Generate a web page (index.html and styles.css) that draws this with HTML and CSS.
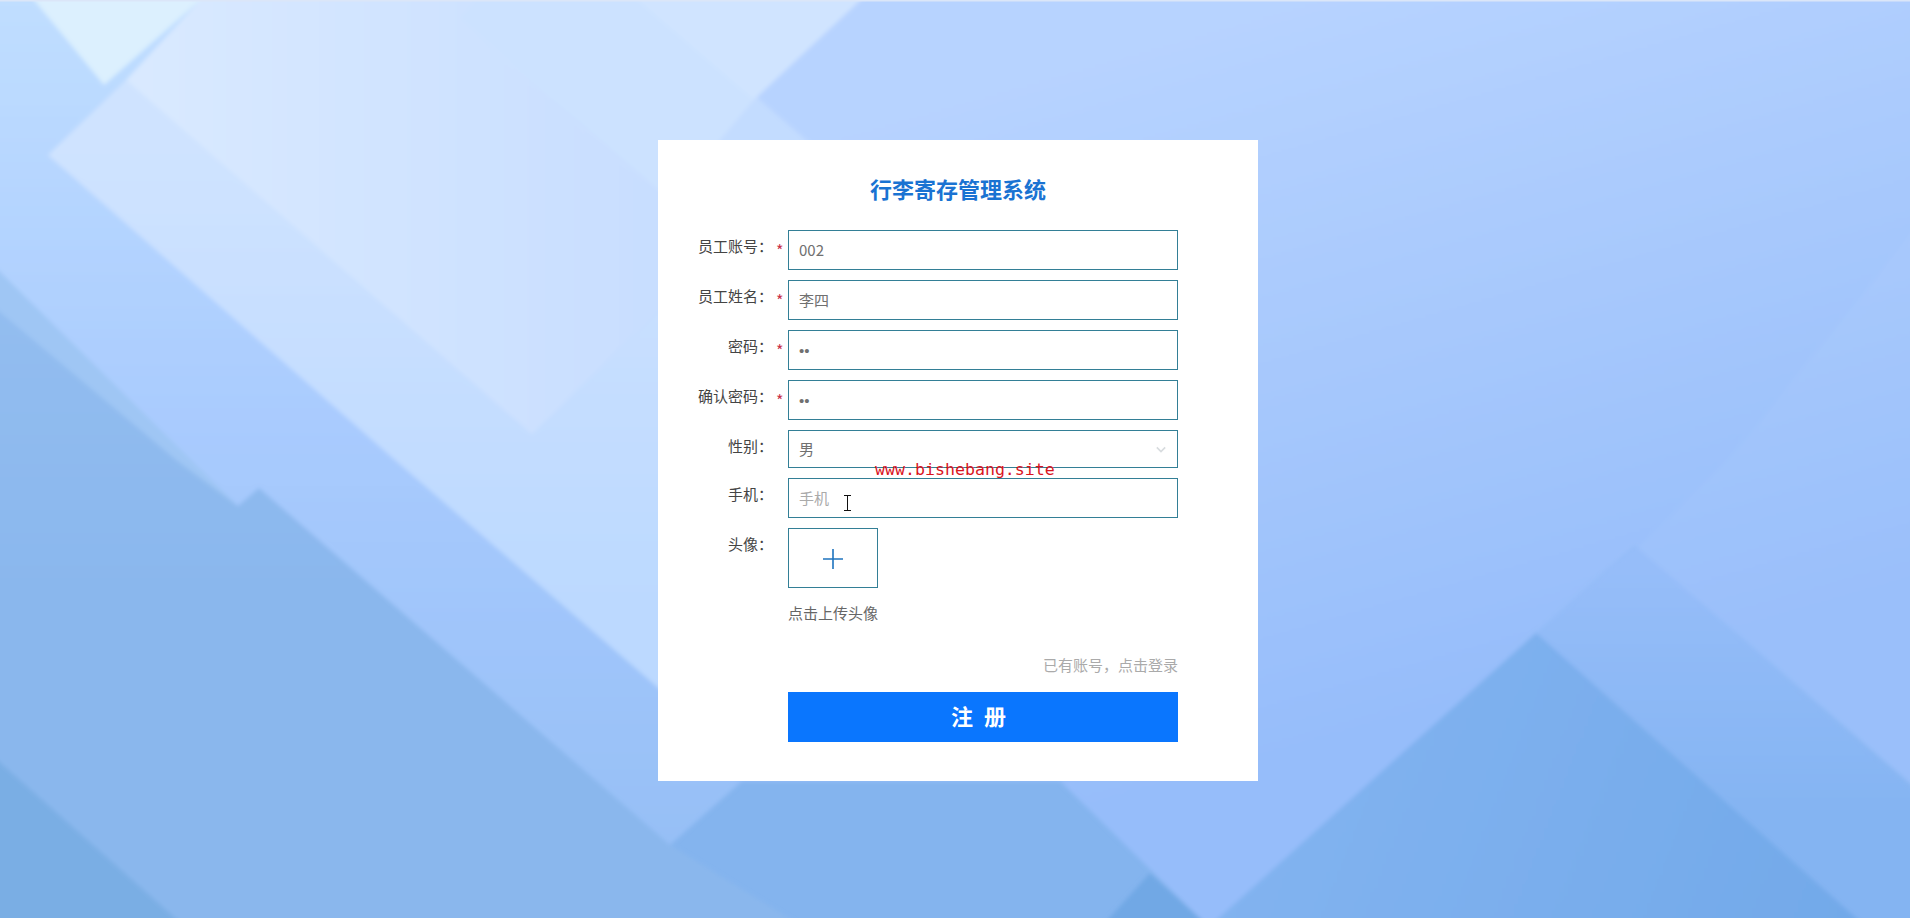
FILE: index.html
```html
<!DOCTYPE html>
<html lang="zh">
<head>
    <meta charset="UTF-8">
    <title>行李寄存管理系统</title>
    <link rel="stylesheet" href="styles.css">
</head>
<body>

<!-- 背景 -->
<svg class="bg" viewBox="0 0 1910 918" xmlns="http://www.w3.org/2000/svg">
    <defs>
        <linearGradient id="gLeft" gradientUnits="userSpaceOnUse" x1="0" y1="0" x2="0" y2="850">
            <stop offset="0" stop-color="#c0deff"/>
            <stop offset="0.5" stop-color="#a9cbfe"/>
            <stop offset="1" stop-color="#96bff6"/>
        </linearGradient>
        <linearGradient id="gRight" gradientUnits="userSpaceOnUse" x1="1300" y1="0" x2="1500" y2="700">
            <stop offset="0" stop-color="#b7d3ff"/>
            <stop offset="1" stop-color="#96bdfa"/>
        </linearGradient>
        <linearGradient id="gBig" gradientUnits="userSpaceOnUse" x1="150" y1="0" x2="660" y2="0">
            <stop offset="0" stop-color="#d9e9ff"/>
            <stop offset="1" stop-color="#c8deff"/>
        </linearGradient>
        <linearGradient id="gBand" gradientUnits="userSpaceOnUse" x1="0" y1="150" x2="0" y2="600">
            <stop offset="0" stop-color="#cfe3ff"/>
            <stop offset="1" stop-color="#bcd9ff"/>
        </linearGradient>
        <linearGradient id="gLow" gradientUnits="userSpaceOnUse" x1="0" y1="300" x2="0" y2="600">
            <stop offset="0" stop-color="#93bdf0"/>
            <stop offset="1" stop-color="#8ab7ed"/>
        </linearGradient>
        <linearGradient id="gHill" gradientUnits="userSpaceOnUse" x1="1300" y1="700" x2="1860" y2="918">
            <stop offset="0" stop-color="#82b3f0"/>
            <stop offset="1" stop-color="#72a9e9"/>
        </linearGradient>
        <linearGradient id="gHill2" gradientUnits="userSpaceOnUse" x1="0" y1="570" x2="0" y2="820">
            <stop offset="0" stop-color="#96bdf9"/>
            <stop offset="1" stop-color="#84b4f2"/>
        </linearGradient>
        <filter id="soft"><feGaussianBlur stdDeviation="2.2"/></filter>
    </defs>
    <rect width="1910" height="918" fill="#84b4ee"/>
    <g filter="url(#soft)">
        <polygon points="-5,267 238,506 259,488 670,845 800,925 -5,925" fill="url(#gLow)"/>
        <polygon points="-5,267 219,460 238,506 176,460 -5,308" fill="#9fc6f4"/>
        <polygon points="-5,758 183,925 -5,925" fill="#7aaee4"/>
        <polygon points="658,-5 1915,-5 1915,788 1635,546 1536,633 1211,925 1207,925 1060,781 658,781" fill="url(#gRight)"/>
        <polygon points="1636,546 1915,790 1915,925 1864,925 1536,633" fill="url(#gHill2)"/>
        <polygon points="1211,925 1536,633 1864,925" fill="url(#gHill)"/>
        <polygon points="1150,873 1103,925 1207,925" fill="#71a8e5"/>
        <polygon points="1638,548 1730,458 1915,230 1915,788" fill="#ffffff" fill-opacity="0.04"/>
        <polygon points="-5,-5 670,-5 670,781 742,781 670,845 259,488 238,506 -5,267" fill="url(#gLeft)"/>
        <polygon points="48,155 126,80 532,435 670,300 670,698 395,460" fill="url(#gBand)"/>
        <polygon points="126,80 205,-5 490,-5 670,145 670,300 532,435" fill="url(#gBig)"/>
        <polygon points="650,-5 760,100 812,145 650,145" fill="#c3dcff"/>
        <polygon points="480,-5 640,-5 754,100 670,200 459,18" fill="#cce2ff"/>
        <polygon points="632,-5 866,-5 754,100" fill="#d0e4ff"/>
        <polygon points="30,-5 206,-5 104,85" fill="#dcf0fe"/>
    </g>
    <rect width="1910" height="1.5" fill="#dbe6f8"/>
</svg>

<div class="card">
    <h2 class="title">行李寄存管理系统</h2>

    <div class="row">
        <label class="label">员工账号：<span class="star">*</span></label>
        <input class="field" type="text" value="002">
    </div>
    <div class="row">
        <label class="label">员工姓名：<span class="star">*</span></label>
        <input class="field" type="text" value="李四">
    </div>
    <div class="row">
        <label class="label">密码：<span class="star">*</span></label>
        <input class="field field-pass" type="password" value="12">
    </div>
    <div class="row">
        <label class="label">确认密码：<span class="star">*</span></label>
        <input class="field field-pass" type="password" value="12">
    </div>
    <div class="row">
        <label class="label">性别：<span class="star star-off">*</span></label>
        <div class="select-box">
            <select class="field field-select">
                <option>男</option>
                <option>女</option>
            </select>
            <svg class="chevron" viewBox="0 0 12 8"><path d="M1 1.5l5 5 5-5" fill="none" stroke="#d8dcdf" stroke-width="2"/></svg>
        </div>
    </div>
    <div class="row">
        <label class="label">手机：<span class="star star-off">*</span></label>
        <input class="field" type="text" placeholder="手机">
    </div>
    <div class="row row-avatar">
        <label class="label">头像：<span class="star star-off">*</span></label>
        <div>
            <div class="upload">
                <svg viewBox="0 0 20 20" width="20" height="20"><path d="M10 0v20M0 10h20" stroke="#1f74bf" stroke-width="1.6" fill="none"/></svg>
            </div>
            <p class="upload-hint">点击上传头像</p>
        </div>
    </div>
    <div class="row row-link">
        <span></span>
        <a class="login-link" href="#">已有账号，点击登录</a>
    </div>
    <div class="row">
        <span></span>
        <button class="submit">注 册</button>
    </div>
</div>

<div class="watermark">www.bishebang.site</div>
<svg class="ibeam" viewBox="0 0 9 16"><path d="M1 .5h7M1 15.5h7M4.5 .5v15" fill="none" stroke="#111" stroke-width="1"/></svg>

</body>
</html>
```

FILE: styles.css
```css
body {
    margin: 0;
    height: 918px;
    overflow: hidden;
    position: relative;
    font-family: "Noto Sans CJK SC", "Liberation Sans", sans-serif;
    font-size: 15px;
    color: #333;
    background-color: #a2c5fc;
}
.bg {
    position: absolute;
    left: 0;
    top: 0;
    width: 1910px;
    height: 918px;
}
.card {
    position: relative;
    box-sizing: border-box;
    width: 600px;
    height: 641px;
    margin-left: 658px;
    top: 140px;
    padding: 33px 80px 40px 0;
    background-color: #fff;
}
.title {
    margin: 0 -80px 27px 0;
    height: 30px;
    line-height: 30px;
    font-size: 22px;
    font-weight: 700;
    text-align: center;
    color: #1a73d2;
}
.row {
    display: grid;
    grid-template-columns: 130px 390px;
    margin-bottom: 10px;
}
.label {
    display: block;
    line-height: 32px;
    text-align: right;
    white-space: nowrap;
    color: #444;
}
.star {
    display: inline-block;
    box-sizing: border-box;
    width: 15px;
    padding-left: 3px;
    text-align: left;
    color: #c8324b;
    font-size: 16px;
    vertical-align: -5px;
    line-height: 14px;
}
.star-off {
    visibility: hidden;
}
.field {
    box-sizing: border-box;
    width: 390px;
    height: 40px;
    padding: 0 10px 2px;
    border: 1px solid #337f96;
    border-radius: 0;
    outline: none;
    background-color: #fff;
    font-family: "Noto Sans CJK SC", "Liberation Sans", sans-serif;
    font-size: 15px;
    color: #707070;
}
.field::placeholder {
    color: #aaa;
}
.field-pass {
    padding-bottom: 0;
    font-family: "Liberation Sans", sans-serif;
}
.select-box {
    position: relative;
    height: 38px;
}
.field-select {
    height: 38px;
    appearance: none;
}
.chevron {
    position: absolute;
    right: 12px;
    top: 16px;
    width: 10px;
    height: 7px;
}
.upload {
    box-sizing: border-box;
    display: flex;
    align-items: center;
    justify-content: center;
    width: 90px;
    height: 60px;
    padding-top: 2px;
    border: 1px solid #337f96;
}
.upload-hint {
    margin: 15px 0 0;
    line-height: 20px;
    color: #666;
}
.row-avatar {
    height: 96px;
    margin-bottom: 30px;
}
.row-link {
    margin-bottom: 16px;
}
.login-link {
    height: 22px;
    line-height: 22px;
    text-align: right;
    text-decoration: none;
    color: #aaa;
}
.submit {
    width: 390px;
    height: 50px;
    padding: 0 6px 4px 0;
    border: none;
    background-color: #0a76fe;
    color: #fff;
    font-family: "Noto Sans CJK SC", "Liberation Sans", sans-serif;
    font-size: 22px;
    font-weight: 700;
    letter-spacing: 3px;
    cursor: pointer;
}
.watermark {
    position: absolute;
    left: 875px;
    top: 459px;
    font-family: "DejaVu Sans Mono", monospace;
    font-size: 16.6px;
    line-height: 22px;
    color: #d9141e;
}
.ibeam {
    position: absolute;
    left: 843px;
    top: 495px;
    width: 9px;
    height: 16px;
}
```
